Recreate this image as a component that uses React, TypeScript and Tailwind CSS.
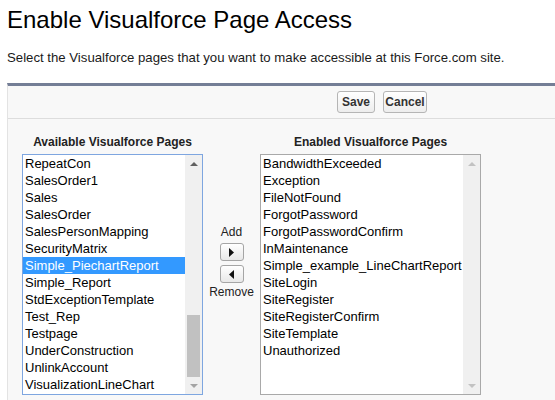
import React from "react";

const available = [
  "RepeatCon",
  "SalesOrder1",
  "Sales",
  "SalesOrder",
  "SalesPersonMapping",
  "SecurityMatrix",
  "Simple_PiechartReport",
  "Simple_Report",
  "StdExceptionTemplate",
  "Test_Rep",
  "Testpage",
  "UnderConstruction",
  "UnlinkAccount",
  "VisualizationLineChart",
];

const enabled = [
  "BandwidthExceeded",
  "Exception",
  "FileNotFound",
  "ForgotPassword",
  "ForgotPasswordConfirm",
  "InMaintenance",
  "Simple_example_LineChartReport",
  "SiteLogin",
  "SiteRegister",
  "SiteRegisterConfirm",
  "SiteTemplate",
  "Unauthorized",
];

function Tri({ dir, color }: { dir: "up" | "down" | "left" | "right"; color: string }) {
  const pts =
    dir === "up"
      ? "0,4 4,0 8,4"
      : dir === "down"
      ? "0,0 8,0 4,4"
      : dir === "right"
      ? "0,0 5,4.5 0,9"
      : "5,0 0,4.5 5,9";
  const w = dir === "up" || dir === "down" ? 8 : 5;
  const h = dir === "up" || dir === "down" ? 4 : 9;
  return (
    <svg width={w} height={h} viewBox={`0 0 ${w} ${h}`} className="block">
      <polygon points={pts} fill={color} />
    </svg>
  );
}

function ScrollBar({ active }: { active: boolean }) {
  return (
    <div className="w-[17px] h-full bg-[#f0f0f0] flex flex-col items-center">
      <div className="h-[17px] flex items-center justify-center">
        <Tri dir="up" color={active ? "#606060" : "#c2c2c2"} />
      </div>
      <div className="flex-1 w-full flex flex-col justify-end px-[2px]">
        {active && <div className="h-[62px] w-full bg-[#c1c1c1]" />}
      </div>
      <div className="h-[17px] flex items-center justify-center">
        <Tri dir="down" color={active ? "#a3a3a3" : "#c2c2c2"} />
      </div>
    </div>
  );
}

function ArrowBtn({ dir }: { dir: "left" | "right" }) {
  return (
    <div className="w-[24px] h-[18px] rounded-[3px] border border-[#a5a5a5] bg-gradient-to-b from-white to-[#e8e8e8] flex items-center justify-center">
      <Tri dir={dir} color="#111" />
    </div>
  );
}

export default function App() {
  return (
    <div className="w-[555px] h-[400px] overflow-hidden bg-white font-['Liberation_Sans',Arial,sans-serif] text-black">
      <h1 className="pl-[7px] pt-[6px] text-[24px] leading-[28px] font-normal text-black">
        Enable Visualforce Page Access
      </h1>
      <p className="pl-[7px] mt-[16px] text-[13.2px] leading-[16px] text-[#1a1a1a]">
        Select the Visualforce pages that you want to make accessible at this Force.com site.
      </p>
      <div className="ml-[7px] mt-[17px] h-[400px] border-t-[3px] border-t-[#747e96] border-l border-l-[#e3e3e3] bg-[#f8f8f8]">
        <div className="pl-[329px] pt-[5px] flex gap-[8px]">
          <div className="w-[38px] h-[22px] rounded-[3px] border border-[#b5b5b5] bg-gradient-to-b from-white to-[#ededed] flex items-center justify-center text-[12px] font-bold text-[#333]">
            Save
          </div>
          <div className="w-[44px] h-[22px] rounded-[3px] border border-[#b5b5b5] bg-gradient-to-b from-white to-[#ededed] flex items-center justify-center text-[12px] font-bold text-[#333]">
            Cancel
          </div>
        </div>
        <div className="mt-[5px] h-px bg-[#dddddd]" />
        <div className="pl-[14px] pt-[16px] flex">
          <div className="flex flex-col items-center w-[181px]">
            <div className="text-[12px] leading-[14px] font-bold text-[#222] h-[19px]">
              Available Visualforce Pages
            </div>
            <div className="w-[181px] h-[241px] border border-[#7ea6e0] bg-white flex">
              <div className="flex-1 flex flex-col">
                {available.map((n, i) => (
                  <div
                    key={n}
                    className={`h-[17px] leading-[17px] pl-[2px] text-[13px] whitespace-nowrap ${
                      i === 6 ? "bg-[#3399ff] text-white" : "text-black"
                    }`}
                  >
                    {n}
                  </div>
                ))}
              </div>
              <ScrollBar active />
            </div>
          </div>
          <div className="w-[57px] flex flex-col items-center pt-[90px] text-[12px] text-[#222]">
            <div className="leading-[14px] mb-[4px]">Add</div>
            <ArrowBtn dir="right" />
            <div className="h-[4px]" />
            <ArrowBtn dir="left" />
            <div className="leading-[14px] mt-[2px]">Remove</div>
          </div>
          <div className="flex flex-col items-center w-[221px]">
            <div className="text-[12px] leading-[14px] font-bold text-[#222] h-[19px]">
              Enabled Visualforce Pages
            </div>
            <div className="w-[221px] h-[241px] border border-[#a9a9a9] bg-white flex">
              <div className="flex-1 flex flex-col">
                {enabled.map((n) => (
                  <div key={n} className="h-[17px] leading-[17px] pl-[2px] text-[13px] whitespace-nowrap text-black">
                    {n}
                  </div>
                ))}
              </div>
              <ScrollBar active={false} />
            </div>
          </div>
        </div>
      </div>
    </div>
  );
}
